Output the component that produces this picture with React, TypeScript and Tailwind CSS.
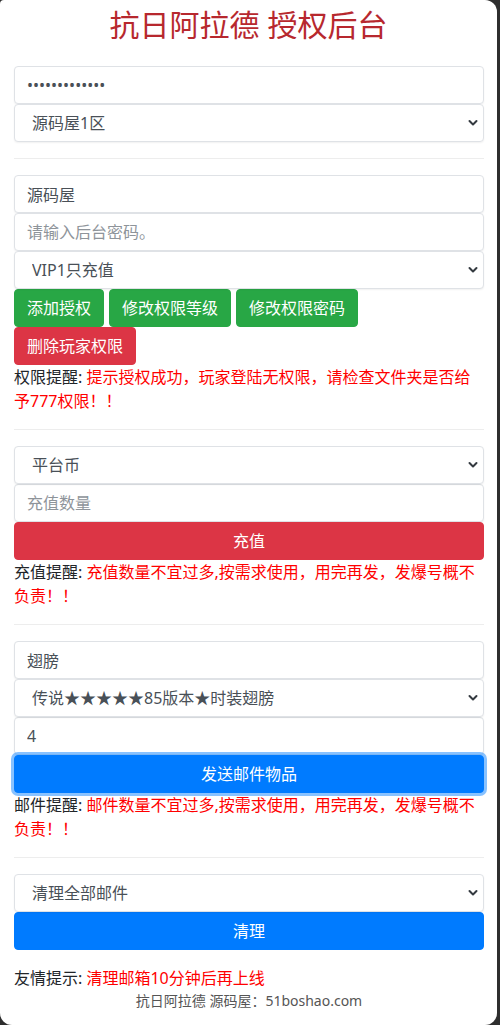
import type { ReactNode } from 'react'

const font = { fontFamily: '"Noto Sans", "Noto Sans CJK SC", sans-serif' }

const fieldClass =
  'block h-[38px] w-full rounded-[4px] border border-[#dfe2e6] bg-white px-3 text-base text-[#495057] shadow-[0_1px_2px_rgba(0,0,0,0.06)] outline-none placeholder:text-[#8e949a]'

function TextField({ value, placeholder, type = 'text' }: { value?: string; placeholder?: string; type?: string }) {
  return <input type={type} defaultValue={value} placeholder={placeholder} className={fieldClass} style={font} />
}

function SelectField({ options }: { options: string[] }) {
  return (
    <div className="relative">
      <select className={fieldClass + ' appearance-none pl-[17px]'} style={font} defaultValue={options[0]}>
        {options.map((option) => (
          <option key={option}>{option}</option>
        ))}
      </select>
      <svg
        className="pointer-events-none absolute right-[6px] top-1/2 -translate-y-1/2"
        width="10"
        height="7"
        viewBox="0 0 10 7"
        fill="none"
      >
        <polyline points="1.5,1.5 5,5 8.5,1.5" stroke="#343a40" strokeWidth="2" strokeLinecap="round" strokeLinejoin="round" />
      </svg>
    </div>
  )
}

function Button({ color, full, focus, children }: { color: 'green' | 'red' | 'blue'; full?: boolean; focus?: boolean; children: ReactNode }) {
  const colors = {
    green: 'bg-[#28a745] border-[#28a745]',
    red: 'bg-[#dc3545] border-[#dc3545]',
    blue: 'bg-[#007bff] border-[#007bff]',
  }
  return (
    <button
      type="button"
      style={font}
      className={[
        'h-[38px] rounded-[4px] border px-3 text-base leading-6 text-white',
        colors[color],
        full ? 'w-full' : '',
        focus ? 'relative z-10 shadow-[0_0_0_3px_rgba(38,143,255,0.55)]' : '',
      ].join(' ')}
    >
      {children}
    </button>
  )
}

function Notice({ label, children }: { label: string; children: ReactNode }) {
  return (
    <p className="text-base leading-6 text-[#212529]" style={font}>
      {label}: <span className="text-[#f00]">{children}</span>
    </p>
  )
}

function Divider() {
  return <hr className="my-4 border-0 border-t border-[rgba(0,0,0,0.07)]" />
}

export default function App() {
  return (
    <div className="h-[1025px] w-[500px] bg-[#2e2e2e]">
      <div className="h-[1025px] w-[497px] overflow-hidden rounded-tl-[4px] rounded-tr-[12px] rounded-br-[12px] rounded-bl-[12px] bg-white pt-[7px]" style={font}>
        <h1 className="text-center text-[30px] leading-[36px] font-normal text-[#b7282e]">抗日阿拉德 授权后台</h1>

        <div className="ml-[14px] mt-[23px] w-[470px]">
          <TextField type="password" value="1234567890123" />
          <SelectField options={['源码屋1区']} />

          <Divider />

          <TextField value="源码屋" />
          <TextField placeholder="请输入后台密码。" />
          <SelectField options={['VIP1只充值']} />
          <div className="flex flex-wrap gap-x-[5px]">
            <Button color="green">添加授权</Button>
            <Button color="green">修改权限等级</Button>
            <Button color="green">修改权限密码</Button>
            <Button color="red">删除玩家权限</Button>
          </div>
          <Notice label="权限提醒">提示授权成功，玩家登陆无权限，请检查文件夹是否给予777权限！！</Notice>

          <Divider />

          <SelectField options={['平台币']} />
          <TextField placeholder="充值数量" />
          <Button color="red" full>
            充值
          </Button>
          <Notice label="充值提醒">充值数量不宜过多,按需求使用，用完再发，发爆号概不负责！！</Notice>

          <Divider />

          <TextField value="翅膀" />
          <SelectField options={['传说★★★★★85版本★时装翅膀']} />
          <TextField value="4" />
          <Button color="blue" full focus>
            发送邮件物品
          </Button>
          <Notice label="邮件提醒">邮件数量不宜过多,按需求使用，用完再发，发爆号概不负责！！</Notice>

          <Divider />

          <SelectField options={['清理全部邮件']} />
          <Button color="blue" full>
            清理
          </Button>
          <div className="mt-4">
            <Notice label="友情提示">清理邮箱10分钟后再上线</Notice>
          </div>
          <p className="text-center text-sm leading-[21px] text-[#555]">抗日阿拉德 源码屋：51boshao.com</p>
        </div>
      </div>
    </div>
  )
}
